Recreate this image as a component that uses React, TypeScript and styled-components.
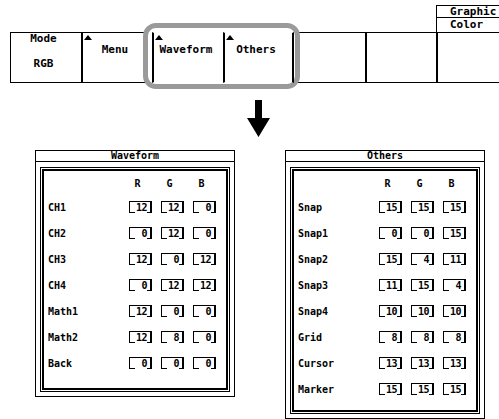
import React from "react";
import styled, { createGlobalStyle } from "styled-components";

const GlobalStyle = createGlobalStyle`
  html, body { margin: 0; padding: 0; background: #fff; }
`;

const Page = styled.div`
  width: 499px;
  height: 419px;
  overflow: hidden;
  background: #fff;
  color: #000;
  font-family: "DejaVu Sans Mono", monospace;
  font-weight: bold;
`;

const LabelRow = styled.div`
  height: 32px;
  box-sizing: border-box;
  padding: 5px 0 0 436px;
`;

const LabelBox = styled.div`
  width: 80px;
  border-top: 1px solid #000;
  border-left: 1px solid #000;
`;

const LabelLine = styled.div<{ $h: number; $line?: boolean }>`
  height: ${(p) => p.$h}px;
  box-sizing: border-box;
  border-bottom: ${(p) => (p.$line ? "1px solid #000" : "none")};
  padding-left: 13px;
  font-size: 11px;
  line-height: ${(p) => p.$h - 1}px;
`;

const Toolbar = styled.div`
  display: flex;
  margin-left: 10px;
  height: 51px;
`;

const Cell = styled.div<{ $first?: boolean; $open?: boolean; $last?: boolean; $split?: boolean }>`
  flex: none;
  width: 71px;
  height: 51px;
  box-sizing: border-box;
  border-top: 1px solid ${(p) => (p.$open ? "transparent" : "#000")};
  border-bottom: 1px solid ${(p) => (p.$open ? "transparent" : "#000")};
  border-left: ${(p) => (p.$first ? "1px" : "2px")} solid #000;
  border-right: ${(p) => (p.$last ? "2px solid #000" : "none")};
  display: flex;
  flex-direction: column;
  align-items: center;
  justify-content: ${(p) => (p.$split ? "space-between" : "flex-start")};
  padding-bottom: ${(p) => (p.$split ? "13px" : "0")};
  font-size: 11px;
  line-height: 11px;
`;

const Tri = styled.div`
  align-self: flex-start;
  width: 0;
  height: 0;
  margin: 2px 0 0 1px;
  border-left: 4.5px solid transparent;
  border-right: 4.5px solid transparent;
  border-bottom: 5px solid #000;
`;

const CellText = styled.div<{ $gap?: number }>`
  margin-top: ${(p) => p.$gap ?? 0}px;
  margin-right: 5px;
`;

const Highlight = styled.div`
  display: flex;
  position: relative;
  z-index: 1;
  &::before {
    content: "";
    position: absolute;
    left: -9px;
    right: -6px;
    top: -9px;
    bottom: -6px;
    border: 5px solid #9a9a9a;
    border-radius: 13px;
    background: #fff;
    z-index: -1;
  }
`;

const ArrowRow = styled.div`
  height: 67px;
  box-sizing: border-box;
  padding: 17px 0 0 247px;
`;

const Panels = styled.div`
  display: flex;
  align-items: flex-start;
  gap: 50px;
  padding-left: 35px;
`;

const Panel = styled.div`
  width: 200px;
  flex: none;
`;

const PanelTitle = styled.div`
  height: 12px;
  box-sizing: border-box;
  border: 1px solid #000;
  text-align: center;
  font-size: 10px;
  line-height: 10px;
`;

const PanelBody = styled.div`
  border: 1px solid #000;
  border-top: none;
  padding: 5px 4px 4px 4px;
`;

const Inner = styled.div<{ $pb: number }>`
  border: 1px solid #000;
  box-shadow: inset 0 0 0 1px #fff, inset 0 0 0 3px #000;
  padding: 8px 0 ${(p) => p.$pb}px 7px;
`;

const Grid = styled.div<{ $h: number }>`
  display: grid;
  grid-template-columns: 72px 23px 23px 23px;
  column-gap: 9px;
  height: ${(p) => p.$h}px;
  align-items: center;
  font-size: 10px;
  line-height: 11px;
`;

const HeaderGrid = styled(Grid)`
  margin-bottom: 4px;
`;

const ColHead = styled.div`
  text-align: center;
  padding-right: 6px;
`;

const RowLabel = styled.div`
  white-space: pre;
`;

const ValueBox = styled.div`
  width: 23px;
  height: 12px;
  box-sizing: border-box;
  border-top: 1px solid #000;
  border-left: 1px solid #000;
  border-right: 2px solid #000;
  display: flex;
  align-items: flex-end;
  white-space: pre;
  letter-spacing: -0.5px;
  font-size: 10px;
  line-height: 11px;
  &::before {
    content: "";
    flex: none;
    width: 5px;
    height: 0;
    margin-right: 1px;
    border-bottom: 1px solid #000;
  }
  &::after {
    content: "";
    margin-left: auto;
    width: 3px;
    height: 0;
    border-bottom: 1px solid #000;
  }
`;

type Row = [string, number, number, number];

const waveform: Row[] = [
  ["CH1", 12, 12, 0],
  ["CH2", 0, 12, 0],
  ["CH3", 12, 0, 12],
  ["CH4", 0, 12, 12],
  ["Math1", 12, 0, 0],
  ["Math2", 12, 8, 0],
  ["Back", 0, 0, 0],
];

const others: Row[] = [
  ["Snap", 15, 15, 15],
  ["Snap1", 0, 0, 15],
  ["Snap2", 15, 4, 11],
  ["Snap3", 11, 15, 4],
  ["Snap4", 10, 10, 10],
  ["Grid", 8, 8, 8],
  ["Cursor", 13, 13, 13],
  ["Marker", 15, 15, 15],
];

const ColorPanel: React.FC<{ title: string; rows: Row[]; pb: number }> = ({ title, rows, pb }) => (
  <Panel>
    <PanelTitle>{title}</PanelTitle>
    <PanelBody>
      <Inner $pb={pb}>
        <HeaderGrid $h={14}>
          <span />
          <ColHead>R</ColHead>
          <ColHead>G</ColHead>
          <ColHead>B</ColHead>
        </HeaderGrid>
        {rows.map(([name, r, g, b]) => (
          <Grid $h={26} key={name}>
            <RowLabel>{name}</RowLabel>
            {[r, g, b].map((v, i) => (
              <ValueBox key={i}>{String(v).padStart(2, " ")}</ValueBox>
            ))}
          </Grid>
        ))}
      </Inner>
    </PanelBody>
  </Panel>
);

export default function App() {
  return (
    <Page>
      <GlobalStyle />
      <LabelRow>
        <LabelBox>
          <LabelLine $h={12} $line>Graphic</LabelLine>
          <LabelLine $h={14}>Color</LabelLine>
        </LabelBox>
      </LabelRow>
      <Toolbar>
        <Cell $first $split>
          <CellText>Mode</CellText>
          <CellText>RGB</CellText>
        </Cell>
        <Cell>
          <Tri />
          <CellText $gap={4}>Menu</CellText>
        </Cell>
        <Highlight>
          <Cell $open>
            <Tri />
            <CellText $gap={4}>Waveform</CellText>
          </Cell>
          <Cell $open $last>
            <Tri />
            <CellText $gap={4}>Others</CellText>
          </Cell>
        </Highlight>
        <Cell />
        <Cell />
        <Cell />
      </Toolbar>
      <ArrowRow>
        <svg width="23" height="37" viewBox="0 0 23 37">
          <polygon points="8,0 15,0 15,18 23,18 11.5,37 0,18 8,18" fill="#000" />
        </svg>
      </ArrowRow>
      <Panels>
        <ColorPanel title="Waveform" rows={waveform} pb={15} />
        <ColorPanel title="Others" rows={others} pb={11} />
      </Panels>
    </Page>
  );
}
